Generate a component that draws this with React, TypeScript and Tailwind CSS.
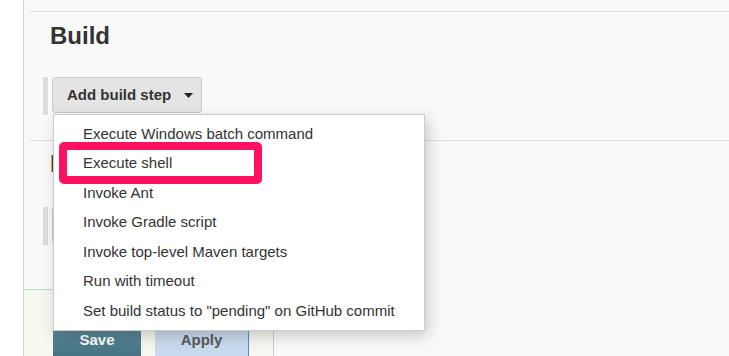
const items = [
  "Execute Windows batch command",
  "Execute shell",
  "Invoke Ant",
  "Invoke Gradle script",
  "Invoke top-level Maven targets",
  "Run with timeout",
  'Set build status to "pending" on GitHub commit',
];

function StepButton({ label }: { label?: string }) {
  return (
    <div className="flex h-[38px] items-start border-l-[5px] border-[#dcdcdc] pl-[4px]">
      <button className="flex h-[36px] w-[150px] items-center rounded-[3px] border border-[#cccccc] bg-[#e4e4e4] pl-[14px] text-[15px] font-bold text-[#333]">
        {label && (
          <>
            <span>{label}</span>
            <svg className="ml-[13px]" width="9" height="5" viewBox="0 0 9 5">
              <path d="M0 0h9L4.5 5z" fill="#222" />
            </svg>
          </>
        )}
      </button>
    </div>
  );
}

export default function App() {
  return (
    <div
      className="flex h-[356px] w-[729px] overflow-hidden bg-white"
      style={{ fontFamily: '"Liberation Sans", Arial, sans-serif' }}
    >
      <div className="w-[24px] shrink-0 border-r border-[#d4d4d4] bg-white" />
      <div className="relative flex flex-1 flex-col bg-[#f9f9f9] pt-[11px]">
        <div className="ml-[6px] border-y border-[#dddddd] pt-[10px] pb-[25px]">
          <h2 className="pl-[20px] text-[24px] leading-[28px] font-bold text-[#333]">Build</h2>
          <div className="mt-[27px] ml-[13px]">
            <StepButton label="Add build step" />
          </div>
        </div>
        {/* next section, mostly hidden under the dropdown */}
        <div className="ml-[6px] pt-[9px]">
          <h2 className="pl-[20px] text-[24px] leading-[28px] font-bold text-[#444]">Post-build Actions</h2>
          <div className="mt-[29px] ml-[13px]">
            <StepButton />
          </div>
        </div>

        <div className="mt-[44px] flex w-[250px] flex-1 gap-[14px] border-t border-r border-[#bcdcc4] bg-[#f6f7ef] pt-[39px] pl-[29px]">
          <button className="flex h-[40px] w-[88px] justify-center bg-linear-to-b from-[#5b8898] to-[#3e6b7a] pt-[1px] text-[15px] leading-[20px] font-bold text-white">
            Save
          </button>
          <button className="flex h-[40px] w-[94px] justify-center border-r border-[#4f8fd6] bg-[#c8dbee] pt-[1px] text-[15px] leading-[20px] font-bold text-[#5a5a5a]">
            Apply
          </button>
        </div>

        <div className="absolute top-[114px] left-[29px] w-[372px] border border-[#cccccc] bg-white py-[4px] shadow-[3px_5px_14px_rgba(0,0,0,0.2)]">
          {items.map((item) => (
            <div key={item} className="flex h-[29.5px] items-center pl-[29px] text-[15px] text-[#333]">
              {item}
            </div>
          ))}
        </div>

        <div className="absolute top-[142px] left-[35px] h-[42px] w-[203px] rounded-[5px] border-[8px] border-[#ff1060]" />
      </div>
    </div>
  );
}
